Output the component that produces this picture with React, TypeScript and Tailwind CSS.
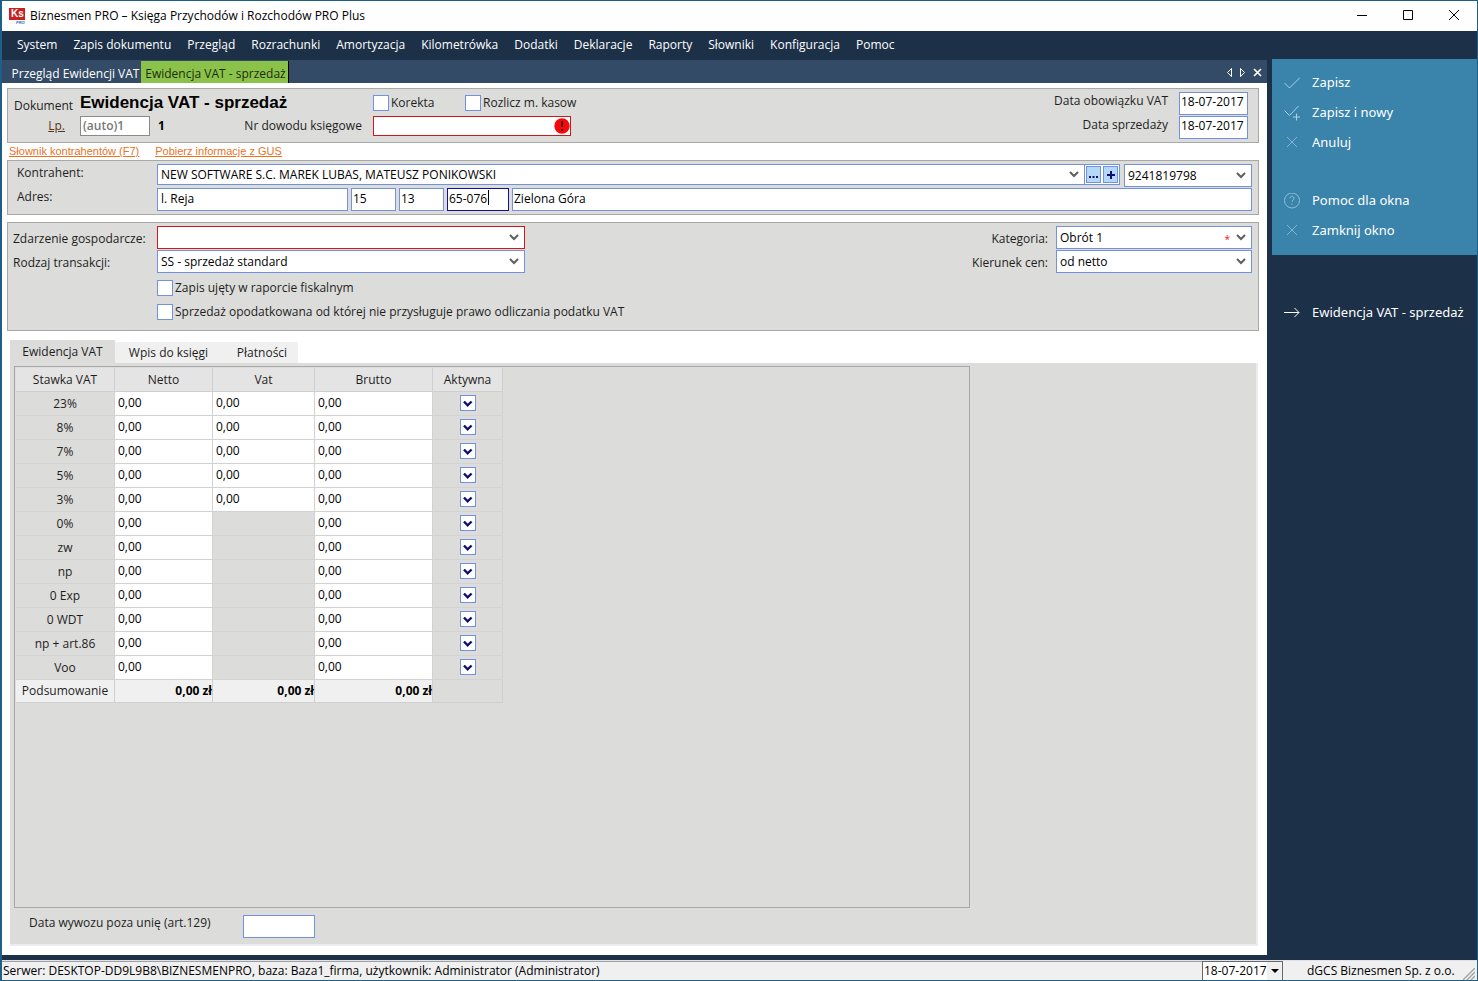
import React, { useId } from "react";

const MENU = [
  "System",
  "Zapis dokumentu",
  "Przegląd",
  "Rozrachunki",
  "Amortyzacja",
  "Kilometrówka",
  "Dodatki",
  "Deklaracje",
  "Raporty",
  "Słowniki",
  "Konfiguracja",
  "Pomoc",
];

const RATES: { name: string; vat: boolean }[] = [
  { name: "23%", vat: true },
  { name: "8%", vat: true },
  { name: "7%", vat: true },
  { name: "5%", vat: true },
  { name: "3%", vat: true },
  { name: "0%", vat: false },
  { name: "zw", vat: false },
  { name: "np", vat: false },
  { name: "0 Exp", vat: false },
  { name: "0 WDT", vat: false },
  { name: "np + art.86", vat: false },
  { name: "Voo", vat: false },
];

function AppLogo() {
  return (
    <svg width="17" height="17" viewBox="0 0 17 17" className="overflow-visible" aria-hidden="true">
      <rect width="16" height="12" fill="#c8201f" />
      <text x="2" y="9" fontSize="10" fontWeight="700" fontFamily="Liberation Sans, sans-serif" fill="#fff">
        Ks
      </text>
      <text x="7" y="16" fontSize="4" fontWeight="700" fontStyle="italic" fontFamily="Liberation Sans, sans-serif" fill="#2a6aa5">
        PRO
      </text>
    </svg>
  );
}

function Chevron() {
  return (
    <svg width="10" height="7" viewBox="0 0 10 7" fill="none" stroke="#5f5f5f" strokeWidth="2" aria-hidden="true">
      <path d="M1 1l4 4 4-4" />
    </svg>
  );
}

function Group({ className = "", children }: { className?: string; children: React.ReactNode }) {
  return <section className={`border border-[#a8a8a8] bg-[#dcdcda] ${className}`}>{children}</section>;
}

function Field({ label, className = "", value = "" }: { label: string; className?: string; value?: string }) {
  return (
    <input
      type="text"
      aria-label={label}
      defaultValue={value}
      className={`h-[23px] rounded-none border bg-white px-px pb-[3px] text-black outline-none ${className}`}
    />
  );
}

function Combo({
  id,
  value,
  className = "",
  label,
  required = false,
}: {
  id?: string;
  value: string;
  className?: string;
  label?: string;
  required?: boolean;
}) {
  return (
    <div className={`relative border bg-white text-black ${className}`}>
      <select
        id={id}
        aria-label={label}
        defaultValue={value}
        className="block h-full w-full appearance-none bg-transparent pr-6 pl-[3px] outline-none"
      >
        <option>{value}</option>
      </select>
      <span className="pointer-events-none absolute inset-y-0 right-[5px] flex items-center gap-1.5">
        {required && <span className="mt-1 text-[10px] text-[#ee2020]">*</span>}
        <Chevron />
      </span>
    </div>
  );
}

function Check({ label, className = "" }: { label: string; className?: string }) {
  return (
    <label className={`flex items-center gap-[2px] whitespace-nowrap ${className}`}>
      <input type="checkbox" className="size-4 shrink-0 appearance-none border border-[#7391dc] bg-white" />
      {label}
    </label>
  );
}

function RateCheck({ label }: { label: string }) {
  return (
    <label className="relative mx-auto block size-4">
      <input
        type="checkbox"
        defaultChecked
        aria-label={label}
        className="block size-4 appearance-none border border-[#7391dc] bg-white"
      />
      <svg
        className="pointer-events-none absolute inset-0"
        width="16"
        height="16"
        viewBox="0 0 16 16"
        fill="none"
        stroke="#10106f"
        strokeWidth="2.4"
        aria-hidden="true"
      >
        <path d="M4 6.5l3.6 3.8 4-3.8" />
      </svg>
    </label>
  );
}

function SideItem({ icon, children }: { icon: React.ReactNode; children: React.ReactNode }) {
  return (
    <button
      type="button"
      className="flex h-[30px] w-full items-center gap-3 pl-3 text-left font-['Noto_Sans',sans-serif] text-[13px] whitespace-nowrap text-white"
    >
      <svg width="16" height="16" viewBox="0 0 16 16" fill="none" stroke="#a9d3ea" strokeWidth="1" className="shrink-0" aria-hidden="true">
        {icon}
      </svg>
      {children}
    </button>
  );
}

const CROSS = <path d="M3 2l10 10M13 2L3 12" stroke="#7fb6d4" />;

function DateField({ label }: { label: string }) {
  const id = useId();
  return (
    <div className="flex items-start justify-end gap-[11px]">
      <label htmlFor={id} className="leading-[18px]">
        {label}
      </label>
      <input
        id={id}
        type="text"
        defaultValue="18-07-2017"
        className="h-[23px] w-[69px] border border-[#7391dc] bg-white px-px pb-1 text-black outline-none"
      />
    </div>
  );
}

function DocumentHeader() {
  return (
    <Group className="flex justify-between py-[3px] pr-[10px] pl-1.5">
      <div>
        <div className="flex h-[21px] items-center">
          <span className="w-[66px] pt-1.5">Dokument</span>
          <h1 className="w-[293px] font-['Liberation_Sans',sans-serif] text-[17px] leading-5 font-bold text-black">
            Ewidencja VAT - sprzedaż
          </h1>
          <Check label="Korekta" className="w-[92px]" />
          <Check label="Rozlicz m. kasow" />
        </div>
        <div className="flex h-[25px] items-center">
          <label htmlFor="lp" className="w-[66px] pr-[15px] text-right text-[#5a3418] underline">
            Lp.
          </label>
          <input
            id="lp"
            type="text"
            defaultValue="(auto)1"
            className="h-5 w-[70px] border border-[#8a8a8a] bg-white px-0.5 font-semibold text-[#777] outline-none"
          />
          <span className="pl-2 font-bold text-black">1</span>
          <label htmlFor="proof" className="w-[208px] pr-[11px] text-right">
            Nr dowodu księgowe
          </label>
          <div className="relative">
            <input id="proof" type="text" className="block h-5 w-[198px] border border-[#d01818] bg-white px-1 outline-none" />
            <svg className="absolute top-[2px] right-px" width="16" height="16" viewBox="0 0 16 16" aria-hidden="true">
              <circle cx="8" cy="8" r="7.7" fill="#f50808" />
              <path d="M8 3v6M8 11v2" stroke="#4a0000" strokeWidth="2" />
            </svg>
          </div>
        </div>
      </div>
      <div className="flex flex-col gap-px">
        <DateField label="Data obowiązku VAT" />
        <DateField label="Data sprzedaży" />
      </div>
    </Group>
  );
}

function Contractor() {
  const blue = "border-[#7391dc]";
  return (
    <Group className="space-y-px py-[3px] pr-1.5 pl-[9px]">
      <div className="flex h-[23px]">
        <label htmlFor="contractor" className="w-[140px] leading-[18px]">
          Kontrahent:
        </label>
        <Combo id="contractor" value="NEW SOFTWARE S.C. MAREK LUBAS, MATEUSZ PONIKOWSKI" className={`h-[21px] flex-1 ${blue}`} />
        <div className="mr-1 flex h-[21px] border border-l-0 border-[#7391dc] bg-white">
          <button type="button" aria-label="Wybierz" className="m-px flex w-[15px] items-end justify-center border border-[#7391dc] bg-[#b5d7f8] pb-1">
            <svg width="9" height="2" viewBox="0 0 9 2" fill="#10106f" aria-hidden="true">
              <path d="M0 0h2v2H0zM3.5 0h2v2h-2zM7 0h2v2H7z" />
            </svg>
          </button>
          <button type="button" aria-label="Dodaj" className="m-px flex w-[15px] items-center justify-center border border-[#7391dc] bg-[#b5d7f8]">
            <svg width="8" height="8" viewBox="0 0 8 8" fill="none" stroke="#10106f" strokeWidth="2" aria-hidden="true">
              <path d="M4 0v8M0 4h8" />
            </svg>
          </button>
        </div>
        <Combo label="NIP" value="9241819798" className={`w-[128px] ${blue}`} />
      </div>
      <div className="flex h-[23px]">
        <span className="w-[140px] leading-[18px]">Adres:</span>
        <div className="flex flex-1 gap-[3px]">
          <Field label="Ulica" value="l. Reja" className={`w-[191px] pl-[3px] ${blue}`} />
          <Field label="Numer domu" value="15" className={`w-[45px] ${blue}`} />
          <Field label="Numer lokalu" value="13" className={`w-[45px] ${blue}`} />
          <div className="relative">
            <Field label="Kod pocztowy" value="65-076" className="w-[62px] border-[#10109a]" />
            <span className="pointer-events-none absolute top-[2px] left-[41px] h-[15px] w-px bg-black" />
          </div>
          <Field label="Miejscowość" value="Zielona Góra" className={`flex-1 ${blue}`} />
        </div>
      </div>
    </Group>
  );
}

function Transaction() {
  const row = "flex h-[23px] items-center";
  return (
    <Group className="flex justify-between pt-[3px] pr-1.5 pb-[10px] pl-[5px]">
      <div className="space-y-px">
        <div className={row}>
          <label htmlFor="event" className="w-36 pt-[3px]">
            Zdarzenie gospodarcze:
          </label>
          <Combo id="event" value="" className="h-full w-[368px] border-[#d01818]" />
        </div>
        <div className={row}>
          <label htmlFor="kind" className="w-36 pt-[3px]">
            Rodzaj transakcji:
          </label>
          <Combo id="kind" value="SS - sprzedaż standard" className="h-full w-[368px] border-[#7391dc]" />
        </div>
        <div className="space-y-2 pt-1.5 pl-36">
          <Check label="Zapis ujęty w raporcie fiskalnym" className="h-4" />
          <Check label="Sprzedaż opodatkowana od której nie przysługuje prawo odliczania podatku VAT" className="h-4" />
        </div>
      </div>
      <div className="space-y-px">
        <div className={`${row} justify-end gap-2`}>
          <label htmlFor="category" className="pt-[3px]">
            Kategoria:
          </label>
          <Combo id="category" value="Obrót 1" required className="h-full w-[196px] border-[#7391dc]" />
        </div>
        <div className={`${row} justify-end gap-2`}>
          <label htmlFor="direction" className="pt-[3px]">
            Kierunek cen:
          </label>
          <Combo id="direction" value="od netto" className="h-full w-[196px] border-[#7391dc]" />
        </div>
      </div>
    </Group>
  );
}

function AmountInput({ label }: { label: string }) {
  return (
    <input
      type="text"
      aria-label={label}
      defaultValue="0,00"
      className="block h-[23px] w-full bg-white px-[3px] pb-0.5 text-black outline-none"
    />
  );
}

function VatTable() {
  const head = "h-6 border-r border-b border-[#cfcfcf] bg-[#e4e4e4] font-normal";
  const cell = "h-6 border-r border-b border-[#d2d2d2] p-0";
  const sum = "h-[23px] border-r border-b border-[#cfcfcf] bg-[#f0f0f0] p-0 text-right font-bold text-black";
  return (
    <table className="w-[487px] table-fixed border-separate border-spacing-0">
      <colgroup>
        <col className="w-[99px]" />
        <col className="w-[98px]" />
        <col className="w-[102px]" />
        <col className="w-[118px]" />
        <col className="w-[70px]" />
      </colgroup>
      <thead>
        <tr>
          {["Stawka VAT", "Netto", "Vat", "Brutto", "Aktywna"].map((h) => (
            <th key={h} scope="col" className={head}>
              {h}
            </th>
          ))}
        </tr>
      </thead>
      <tbody>
        {RATES.map((r) => (
          <tr key={r.name}>
            <th scope="row" className={`${cell} font-normal`}>
              {r.name}
            </th>
            <td className={cell}>
              <AmountInput label={`Netto ${r.name}`} />
            </td>
            <td className={cell}>{r.vat && <AmountInput label={`Vat ${r.name}`} />}</td>
            <td className={cell}>
              <AmountInput label={`Brutto ${r.name}`} />
            </td>
            <td className="h-6 border-r border-b border-[#d2d2d2] p-0 pb-px">
              <RateCheck label={`Aktywna ${r.name}`} />
            </td>
          </tr>
        ))}
      </tbody>
      <tfoot>
        <tr>
          <th scope="row" className="h-[23px] border-r border-b border-[#cfcfcf] bg-[#f0f0f0] p-0 font-normal">
            Podsumowanie
          </th>
          <td className={sum}>0,00 zł</td>
          <td className={sum}>0,00 zł</td>
          <td className={sum}>0,00 zł</td>
          <td className="border-r border-b border-[#cfcfcf]" />
        </tr>
      </tfoot>
    </table>
  );
}

function Details() {
  return (
    <div className="mt-[9px] mr-px ml-[3px] flex flex-1 flex-col">
      <div className="flex h-[23px] items-end" role="tablist">
        <button type="button" role="tab" aria-selected="true" className="h-full w-[105px] bg-[#dcdcda]">
          Ewidencja VAT
        </button>
        <button type="button" role="tab" aria-selected="false" className="h-[21px] w-[107px] bg-[#f0f0f0]">
          Wpis do księgi
        </button>
        <button type="button" role="tab" aria-selected="false" className="h-[21px] w-[76px] bg-[#f0f0f0] pl-1">
          Płatności
        </button>
      </div>
      <div className="flex flex-1 flex-col border-r-2 border-b-2 border-[#ececec] bg-[#dcdcda] pt-[3px] pl-1">
        <div className="mr-[286px] flex-1 border border-[#a8a8a8] pt-px pl-px">
          <VatTable />
        </div>
        <div className="flex h-9 items-start gap-9 pt-[7px] pl-[15px]">
          <label htmlFor="export-date" className="w-[178px] whitespace-nowrap">
            Data wywozu poza unię (art.129)
          </label>
          <input id="export-date" type="text" className="h-[23px] w-[72px] border border-[#7391dc] bg-white px-px outline-none" />
        </div>
      </div>
    </div>
  );
}

function Sidebar() {
  return (
    <aside className="ml-[5px] w-[205px] shrink-0">
      <div className="bg-[#3a83aa] pt-[9px] pb-[9px]">
        <SideItem icon={<path d="M0.5 8l5 5L16 2.5" />}>Zapisz</SideItem>
        <SideItem icon={<path d="M0.5 5.500l5 5L14.500 1M12.500 8.500v7M9 12h7" />}>Zapisz i nowy</SideItem>
        <SideItem icon={CROSS}>Anuluj</SideItem>
        <div className="h-7" />
        <SideItem
          icon={
            <g stroke="#8fc0dc">
              <circle cx="8" cy="7.500" r="7.500" />
              <path d="M6 5.500c0-3 4-3 4-.5C10 7 8 7 8 9M8 10.500v1.200" />
            </g>
          }
        >
          Pomoc dla okna
        </SideItem>
        <SideItem icon={CROSS}>Zamknij okno</SideItem>
      </div>
      <div className="pt-[43px]">
        <SideItem icon={<path d="M0 7.500h15M10.500 3l4.500 4.500-4.500 4.500" stroke="#fff" />}>Ewidencja VAT - sprzedaż</SideItem>
      </div>
    </aside>
  );
}

function TitleBar() {
  return (
    <header className="flex h-[30px] items-center bg-white pr-[17px] pl-[7px] text-black">
      <AppLogo />
      <span className="flex-1 pl-1">Biznesmen PRO – Księga Przychodów i Rozchodów PRO Plus</span>
      <div className="flex gap-[34px]">
        <button type="button" aria-label="Minimalizuj">
          <svg width="12" height="12" viewBox="0 0 12 12" fill="none" stroke="#000">
            <path d="M1 5.500h10" />
          </svg>
        </button>
        <button type="button" aria-label="Maksymalizuj">
          <svg width="12" height="12" viewBox="0 0 12 12" fill="none" stroke="#000">
            <path d="M1.500 0.500h9v9h-9z" />
          </svg>
        </button>
        <button type="button" aria-label="Zamknij">
          <svg width="12" height="12" viewBox="0 0 12 12" fill="none" stroke="#000">
            <path d="M1 0l10 10M11 0L1 10" />
          </svg>
        </button>
      </div>
    </header>
  );
}

function DocumentTabs() {
  return (
    <div className="flex h-[23px] items-end justify-between bg-[#334b66] pr-[5px]">
      <div className="flex h-[22px]">
        <button type="button" className="w-[139px] pt-[3px] pl-2 whitespace-nowrap text-white">
          Przegląd Ewidencji VAT
        </button>
        <button type="button" className="w-[148px] border-r border-black bg-[#8bc34a] pt-[3px] pl-0.5 text-[#1c2b10]">
          Ewidencja VAT - sprzedaż
        </button>
      </div>
      <div className="flex h-[22px] items-center gap-1">
        <button type="button" aria-label="Poprzednia karta">
          <svg width="9" height="9" viewBox="0 0 9 9" fill="none" stroke="#fff">
            <path d="M6.500 0.500v8l-4-4z" />
          </svg>
        </button>
        <button type="button" aria-label="Następna karta">
          <svg width="9" height="9" viewBox="0 0 9 9" fill="none" stroke="#fff">
            <path d="M2.500 0.500v8l4-4z" />
          </svg>
        </button>
        <button type="button" aria-label="Zamknij kartę" className="pl-0.5">
          <svg width="9" height="9" viewBox="0 0 9 9" fill="none" stroke="#fff" strokeWidth="1.700">
            <path d="M1 1l7 7M8 1L1 8" />
          </svg>
        </button>
      </div>
    </div>
  );
}

function StatusBar() {
  return (
    <footer className="flex h-5 items-stretch border-t border-[#dfe3e8] bg-[#f0f0f0] text-black">
      <span className="flex-1 border-t border-[#a0a0a0] pl-px leading-[18px]">
        Serwer: DESKTOP-DD9L9B8\BIZNESMENPRO, baza: Baza1_firma, użytkownik: Administrator (Administrator)
      </span>
      <div className="relative w-[81px] border border-b-0 border-[#696969] bg-white">
        <select aria-label="Data" defaultValue="18-07-2017" className="block h-full w-full appearance-none bg-transparent pl-px outline-none">
          <option>18-07-2017</option>
        </select>
        <span className="pointer-events-none absolute inset-y-0 right-0 flex w-[15px] items-center justify-center bg-[#f0f0f0]">
          <svg width="8" height="4" viewBox="0 0 8 4" aria-hidden="true">
            <path d="M0 0h8L4 4z" fill="#000" />
          </svg>
        </span>
      </div>
      <span className="w-[180px] pl-6 leading-5">dGCS Biznesmen Sp. z o.o.</span>
      <span className="flex w-[14px] items-end">
        <svg width="12" height="12" viewBox="0 0 12 12" stroke="#a0a0a0" strokeWidth="1.300" aria-hidden="true">
          <path d="M0 12L12 0M4 12l8-8M8 12l4-4" />
        </svg>
      </span>
    </footer>
  );
}

export default function App() {
  return (
    <div className="flex min-h-screen flex-col border border-l-2 border-[#1d5f88] bg-[#1c3047] font-['Open_Sans','Noto_Sans',sans-serif] text-xs text-[#1e1e1e]">
      <TitleBar />
      <div className="flex flex-1 flex-col">
        <nav className="flex h-7 items-center gap-4 pl-[15px] text-white">
          {MENU.map((m) => (
            <button key={m} type="button" className="whitespace-nowrap">
              {m}
            </button>
          ))}
        </nav>
        <div className="flex flex-1">
          <main className="mt-px mb-[5px] flex min-w-0 flex-1 flex-col">
            <DocumentTabs />
            <div className="flex flex-1 flex-col bg-white pt-[5px] pr-2 pb-[9px] pl-[5px]">
              <DocumentHeader />
              <div className="flex h-[17px] gap-4 pl-0.5 font-['Liberation_Sans',sans-serif] text-[11px] leading-4 text-[#e8731f] underline">
                <a href="#kontrahenci">Słownik kontrahentów (F7)</a>
                <a href="#gus">Pobierz informacje z GUS</a>
              </div>
              <Contractor />
              <div className="h-[7px]" />
              <Transaction />
              <Details />
            </div>
          </main>
          <Sidebar />
        </div>
      </div>
      <StatusBar />
    </div>
  );
}
